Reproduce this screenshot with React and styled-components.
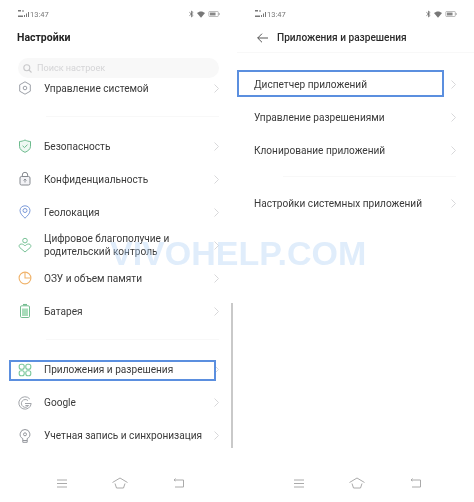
import React from "react";
import styled, { createGlobalStyle } from "styled-components";

const Global = createGlobalStyle`
   html, body { margin: 0; padding: 0; background: #fff; }
   body { font-family: Roboto, "Liberation Sans", sans-serif; }
`;

const Signal = () => (
   <svg width="11" height="8" viewBox="0 0 11 8" fill="#777">
      <rect x="0" y="0" width="3" height="1.500" />
      <rect x="4" y="0.500" width="2" height="1" />
      <rect x="0" y="5.500" width="5" height="1.500" />
      <rect x="6" y="5" width="1" height="2" />
      <rect x="8" y="3.500" width="1" height="3.500" />
      <rect x="10" y="2" width="1" height="5" />
   </svg>
);

const Bluetooth = () => (
   <svg width="5" height="8" viewBox="0 0 6 9" fill="none" stroke="#666" strokeWidth="0.900">
      <path d="M0.500 2.500L5 6.200 3 8V1L5 2.800 0.500 6.500" />
   </svg>
);

const Wifi = () => (
   <svg width="8" height="7" viewBox="0 0 10 8" fill="#777">
      <path d="M0 2.200C3 -0.600 7 -0.600 10 2.200L5 8z" />
   </svg>
);

const Bat = () => (
   <svg width="12" height="6" viewBox="0 0 13 7" fill="none">
      <rect x="0.500" y="0.500" width="11" height="6" rx="1" stroke="#999" strokeWidth="0.800" />
      <rect x="1.800" y="1.800" width="6.500" height="3.400" fill="#888" />
      <rect x="12" y="2.300" width="1" height="2.400" fill="#999" />
   </svg>
);

const icons = {
   system: (
      <g stroke="#9da1a8" strokeWidth="1">
         <path d="M8 1.800l5.300 3v6.400L8 14.200l-5.300-3V4.800z" strokeLinejoin="round" />
         <circle cx="8" cy="8" r="1.800" />
      </g>
   ),
   shield: (
      <g stroke="#6dbb8e" strokeWidth="1">
         <path d="M8 2c2 1 3.600 1.400 5.500 1.500v4.800c0 3-2.600 4.800-5.500 6-2.900-1.200-5.500-3-5.500-6V3.500C4.400 3.400 6 3 8 2z" fill="#eef8f2" />
         <path d="M5.600 7.800l1.900 1.800 3-3" />
      </g>
   ),
   lock: (
      <g stroke="#85898f" strokeWidth="1">
         <rect x="3" y="5.500" width="10" height="8.500" rx="1.500" fill="#f3f3f6" />
         <path d="M5.300 5.500V4a2.700 2.700 0 0 1 5.400 0v1.500" />
         <path d="M8 8v3.500M6.500 9.500L8 8l1.500 1.500" strokeWidth="0.900" />
      </g>
   ),
   pin: (
      <g stroke="#7c9ad9" strokeWidth="1">
         <path d="M8 1.800c3 0 5 2.200 5 4.800 0 3.100-2.900 5.500-5 7.600-2.100-2.100-5-4.500-5-7.600 0-2.600 2-4.800 5-4.800z" />
         <circle cx="8" cy="6.500" r="2" />
      </g>
   ),
   wellbeing: (
      <g stroke="#79c297" strokeWidth="1">
         <circle cx="8" cy="3.600" r="2.300" />
         <path d="M8 15L2.800 10.600C1.400 9.100 2.300 7 4.200 7 5.800 7 7 7.700 8 8.900 9 7.700 10.200 7 11.800 7c1.900 0 2.800 2.100 1.400 3.600z" />
      </g>
   ),
   memory: (
      <g stroke="#f0b36b" strokeWidth="1.100">
         <circle cx="8" cy="8" r="5.900" />
         <path d="M8 2.100V8h5.900" />
      </g>
   ),
   battery: (
      <g stroke="#74bd90" strokeWidth="1">
         <rect x="3.500" y="2.800" width="9" height="11.700" rx="1.200" />
         <rect x="5" y="5.500" width="6" height="7.500" fill="#a8dcba" stroke="none" />
         <path d="M6 1.700h4" strokeWidth="1.500" />
      </g>
   ),
   apps: (
      <g stroke="#7ac79a" strokeWidth="1.100">
         <rect x="2.200" y="2.200" width="5" height="5" rx="2" />
         <rect x="8.800" y="2.200" width="5" height="5" rx="2" />
         <rect x="2.200" y="8.800" width="5" height="5" rx="2" />
         <rect x="8.800" y="8.800" width="5" height="5" rx="2" />
      </g>
   ),
   google: (
      <g stroke="#a2a5aa" strokeWidth="1">
         <path d="M12.800 4A6.200 6.200 0 1 0 14.200 8.500H8" />
         <path d="M11 5.600A3.900 3.900 0 1 0 11.600 10.500H8.400" />
      </g>
   ),
   account: (
      <g stroke="#94979d" strokeWidth="1">
         <path d="M8 1.500a4.800 4.800 0 0 1 2.200 9.100V14.300H5.800V10.600A4.800 4.800 0 0 1 8 1.500z" strokeLinejoin="round" />
         <circle cx="8" cy="6.300" r="1.500" />
         <path d="M5.800 12.500h4.400" />
      </g>
   ),
};

function Icon({ name }) {
   return (
      <svg width="16" height="16" viewBox="0 0 16 16" fill="none">
         {icons[name]}
      </svg>
   );
}

const Chevron = () => (
   <ChevronSvg width="5" height="9" viewBox="0 0 5 9" fill="none" stroke="#d8d8da" strokeWidth="1">
      <path d="M0.500 0.500L4.500 4.500 0.500 8.500" />
   </ChevronSvg>
);

function Row({ icon, children, active, side, short }) {
   return (
      <RowBox $short={short} $active={active} $side={side}>
         {icon && (
            <IconSlot>
               <Icon name={icon} />
            </IconSlot>
         )}
         <Label>{children}</Label>
         <Chevron />
      </RowBox>
   );
}

function StatusRow() {
   return (
      <StatusBar>
         <Signal />
         <Time>13:47</Time>
         <StatusRight>
            <Bluetooth />
            <Wifi />
            <Bat />
         </StatusRight>
      </StatusBar>
   );
}

function NavRow() {
   return (
      <NavBar>
         <svg width="10" height="9" viewBox="0 0 10 9" fill="none" stroke="#aaa" strokeWidth="1">
            <path d="M0 1h10M0 4.500h10M0 8h10" />
         </svg>
         <svg width="16" height="12" viewBox="0 0 16 12" fill="none" stroke="#aaa" strokeWidth="1">
            <path d="M0.500 5.500L8 1l7.500 4.500M3 6.500L4.500 11h7L13 6.500" />
         </svg>
         <svg width="11" height="10" viewBox="0 0 11 10" fill="none" stroke="#aaa" strokeWidth="1">
            <path d="M1 2h9.500v7H2" />
            <path d="M2.500 0.500L1 2l1.500 1" />
         </svg>
      </NavBar>
   );
}

function App() {
   return (
      <Screen>
         <Global />
         <Panel>
            <StatusRow />
            <Title>Настройки</Title>
            <Search>
               <svg width="9" height="9" viewBox="0 0 9 9" fill="none" stroke="#c8c8ca" strokeWidth="1.100">
                  <circle cx="3.800" cy="3.800" r="3" />
                  <path d="M6 6l2.500 2.500" />
               </svg>
               <SearchText>Поиск настроек</SearchText>
            </Search>
            <Row icon="system" short>Управление системой</Row>
            <Separator $top={18} $bottom={12.5} />
            <Row icon="shield">Безопасность</Row>
            <Row icon="lock">Конфиденциальность</Row>
            <Row icon="pin">Геолокация</Row>
            <Row icon="wellbeing">Цифровое благополучие и<br />родительский контроль</Row>
            <Row icon="memory">ОЗУ и объем памяти</Row>
            <Row icon="battery">Батарея</Row>
            <Separator $top={11.5} $bottom={13} />
            <Row icon="apps" active side="left">Приложения и разрешения</Row>
            <Row icon="google">Google</Row>
            <Row icon="account">Учетная запись и синхронизация</Row>
            <NavRow />
            <ScrollThumb />
         </Panel>
         <Panel>
            <StatusRow />
            <BackHeader>
               <svg width="11" height="10" viewBox="0 0 11 10" fill="none" stroke="#444" strokeWidth="0.900">
                  <path d="M11 5H0.700M5 0.700L0.700 5 5 9.300" />
               </svg>
               <HeaderTitle>Приложения и разрешения</HeaderTitle>
            </BackHeader>
            <Separator $top={0} $bottom={15} $wide />
            <Row active side="right">Диспетчер приложений</Row>
            <Row>Управление разрешениями</Row>
            <Row>Клонирование приложений</Row>
            <Separator $top={9} $bottom={10} />
            <Row>Настройки системных приложений</Row>
            <NavRow />
         </Panel>
         <Watermark>VIVOHELP.COM</Watermark>
      </Screen>
   );
}

const Screen = styled.main`
   position: relative;
   width: 474px;
   height: 502px;
   display: flex;
   overflow: hidden;
   background: #fff;
   color: #333;
   filter: blur(0.3px);
`;

const Panel = styled.section`
   position: relative;
   width: 237px;
   height: 502px;
   display: flex;
   flex-direction: column;
`;

const StatusBar = styled.div`
   height: 10px;
   margin-top: 9px;
   padding: 0 17px 0 18px;
   display: flex;
   align-items: center;
   gap: 1px;
`;

const Time = styled.span`
   font-size: 7.5px;
   color: #777;
`;

const StatusRight = styled.div`
   margin-left: auto;
   display: flex;
   align-items: center;
   gap: 3px;
`;

const Title = styled.h1`
   margin: 11px 0 0;
   padding-left: 17px;
   height: 16px;
   line-height: 16px;
   font-size: 10.5px;
   font-weight: 700;
   color: #222;
`;

const Search = styled.div`
   margin: 12px 18px 0 18px;
   height: 20px;
   border-radius: 10px;
   background: #f8f8f8;
   display: flex;
   align-items: center;
   gap: 5px;
   padding-left: 5px;
`;

const SearchText = styled.span`
   font-size: 9.1px;
   color: #d4d4d6;
`;

const RowBox = styled.div`
   position: relative;
   flex: none;
   height: ${(p) => (p.$short ? "20px" : "33px")};
   padding: 0 18px 0 17px;
   display: flex;
   align-items: center;

   ${(p) =>
      p.$active &&
      `&::after {
         content: "";
         position: absolute;
         border: 2px solid #5b8fdf;
         box-sizing: border-box;
         ${p.$side === "left"
            ? "left: 9px; right: 21px; top: 7px; bottom: 5px;"
            : "left: 0; right: 30px; top: 2px; bottom: 4px;"}
      }`}
`;

const IconSlot = styled.span`
   width: 16px;
   height: 16px;
   margin-right: 11px;
   display: flex;
`;

const Label = styled.span`
   flex: 1;
   font-size: 10.1px;
   line-height: 13px;
   color: #3a3a3a;
   white-space: nowrap;
`;

const ChevronSvg = styled.svg`
   flex: none;
`;

const Separator = styled.div`
   flex: none;
   height: 1px;
   margin: ${(p) => p.$top}px ${(p) => (p.$wide ? 0 : 18)}px ${(p) => p.$bottom}px ${(p) => (p.$wide ? 0 : 46)}px;
   background: #f8f8f8;
`;

const BackHeader = styled.div`
   margin-top: 11px;
   height: 16px;
   padding: 0 0 6px 20px;
   box-sizing: content-box;
   display: flex;
   align-items: flex-start;
   gap: 9px;

   svg {
      margin-top: 3px;
   }
`;

const HeaderTitle = styled.h2`
   margin: 0;
   line-height: 16px;
   font-size: 10.1px;
   font-weight: 500;
   color: #2b2b2b;
`;

const NavBar = styled.nav`
   margin-top: auto;
   margin-bottom: 13px;
   padding: 0 53px 0 57px;
   display: flex;
   align-items: center;
   justify-content: space-between;
   height: 12px;
`;

const ScrollThumb = styled.div`
   position: absolute;
   left: 231px;
   top: 303px;
   width: 1.500px;
   height: 145px;
   background: #c9c9c9;
`;

const Watermark = styled.div`
   position: absolute;
   left: 110px;
   top: 233px;
   font-family: "Liberation Sans", sans-serif;
   font-size: 34px;
   line-height: 40px;
   font-weight: 700;
   color: rgba(170, 205, 245, 0.36);
   white-space: nowrap;
   pointer-events: none;
`;

export default App;
